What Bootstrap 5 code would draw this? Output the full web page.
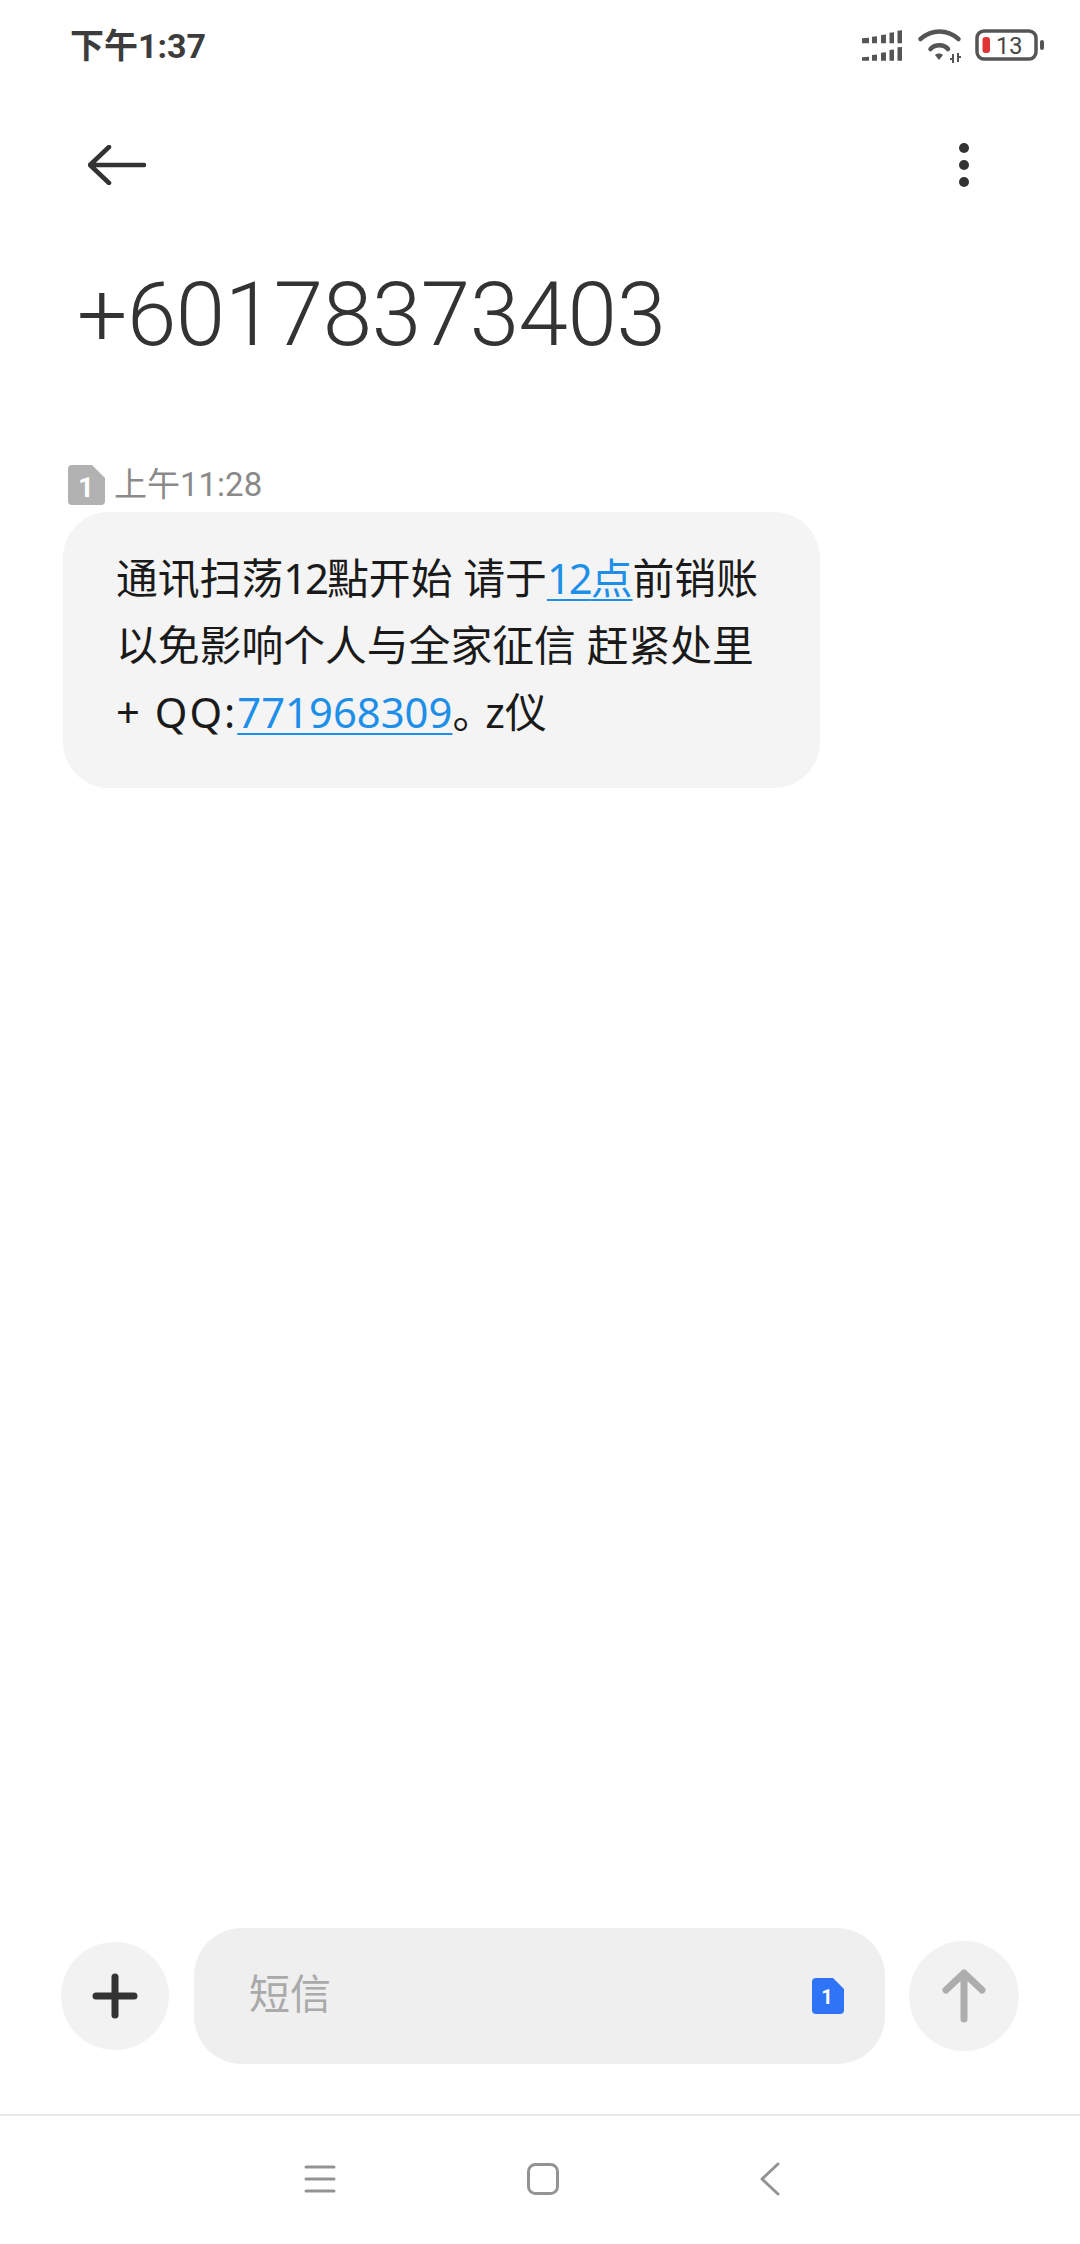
<!DOCTYPE html>
<html lang="zh">
  <head>
    <meta charset="UTF-8" />
    <title>短信</title>
    <link href="https://cdn.jsdelivr.net/npm/bootstrap@5.3.2/dist/css/bootstrap.min.css" rel="stylesheet" />
    <style>
      html, body { height: 100%; }
      body {
        width: 1080px;
        height: 2244px;
        overflow: hidden;
        background: #fff;
        font-family: Roboto, "Noto Sans CJK SC", sans-serif;
      }
      .status-row { height: 92px; padding: 0 36px 0 70px; }
      .status-time { font-size: 34px; font-weight: 700; color: #3c3c3c; line-height: 1; }
      .top-row { height: 92px; padding: 0 110px 0 88px; margin-top: 27px; }
      .phone-title {
        font-size: 89px; font-weight: 300; color: #333; line-height: 1;
        padding-left: 77px; margin-top: 59px; letter-spacing: -0.4px;
      }
      .msg-time {
        padding-left: 68px; margin-top: 98px; height: 55px;
        font-size: 33px; color: #8a8a8a; line-height: 1; gap: 9px;
      }
      .msg-bubble {
        width: 757px; height: 276px; margin: 0 0 0 63px; padding: 32px 20px 0 53px;
        background: #f4f4f4; border-radius: 46px;
        font-family: "Noto Sans", "Noto Sans CJK SC", sans-serif;
        font-size: 41.8px; line-height: 67px; color: #1a1a1a;
      }
      .msg-bubble a { color: #1d8fe8; text-decoration: underline; text-underline-offset: 5px; text-decoration-thickness: 2px; }
      .tight-num { letter-spacing: -2px; }
      .qq-label { letter-spacing: 2px; }
      .small-stop { letter-spacing: -9px; }
      .compose-row { height: 136px; padding-left: 61px; margin-bottom: 50px; }
      .round-btn { width: 108px; height: 108px; background: #f2f2f2; border-radius: 50%; flex: none; }
      .send-btn { width: 110px; height: 110px; margin-left: 24px; }
      .compose-input {
        width: 691px; height: 136px; margin-left: 25px; padding: 0 41px 0 55px;
        background: #efefef; border-radius: 48px;
        font-size: 41px; color: #aaa;
      }
      .nav-row { height: 130px; border-top: 2px solid #e8e8e8; }
      .nav-row svg { flex: none; }
      .nav-inner { padding-left: 304px; height: 126px; }
      .nav-home { margin-left: 191px; }
      .nav-back { margin-left: 201px; }
    </style>
  </head>
  <body class="d-flex flex-column">
    <div class="status-row d-flex align-items-center justify-content-between">
      <span class="status-time">下午1:37</span>
      <svg width="184" height="36" viewBox="0 0 184 36">
        <g fill="#555">
          <path d="M2 10.300l7-.6v5.600H2zM12 8.700l5-.4v7h-5zM21 7l5-.4v8.700h-5zM29.500 4.700l4.500-.4v11h-4.500zM37.500 2.700l4.500-.4v13h-4.500z" />
          <path d="M2 29.300l7-.6v4H2zM12 27l5-.4v6.100h-5zM21 24.700l5-.4v8.400h-5zM29.500 22l4.500-.4v11.100h-4.500zM37.500 19.300l4.500-.4v13.800h-4.500z" />
        </g>
        <g fill="none" stroke="#555" stroke-width="4.500" stroke-linecap="round">
          <path d="M60.500 11C72 1 87 1 98.500 11" />
          <path d="M70.500 21C75 16 84 16 88 21" />
        </g>
        <path d="M75 27c2-2 6-2 8 0l-4 5z" fill="#555" />
        <path d="M93 26v9M98 25v9M90 31h3M98 29h3" stroke="#555" stroke-width="2" fill="none" />
        <rect x="117" y="3" width="59" height="28" rx="7" fill="none" stroke="#555" stroke-width="3.500" />
        <rect x="122.500" y="9" width="7.500" height="16" rx="3" fill="#e03535" />
        <rect x="180" y="12" width="4" height="10" rx="2" fill="#555" />
        <text x="136" y="26" font-family="Roboto, sans-serif" font-size="23.500" fill="#444">13</text>
      </svg>
    </div>

    <div class="top-row d-flex align-items-center justify-content-between">
      <svg width="58" height="40" viewBox="0 0 58 40">
        <path d="M21 2L2 20l19 18M2 20h54" fill="none" stroke="#333" stroke-width="4.500" stroke-linecap="round" stroke-linejoin="round" />
      </svg>
      <svg width="12" height="46" viewBox="0 0 12 46">
        <circle cx="6" cy="6" r="5" fill="#333" /><circle cx="6" cy="23" r="5" fill="#333" /><circle cx="6" cy="40" r="5" fill="#333" />
      </svg>
    </div>

    <div class="phone-title">+60178373403</div>

    <div class="msg-time d-flex align-items-center">
      <svg width="37" height="40" viewBox="0 0 37 40">
        <path d="M4 0h20l13 13v23a4 4 0 0 1-4 4H4a4 4 0 0 1-4-4V4a4 4 0 0 1 4-4z" fill="#b2b2b2" />
        <text x="18" y="32" text-anchor="middle" font-family="Roboto, sans-serif" font-weight="700" font-size="28" fill="#fff">1</text>
      </svg>
      <span>上午11:28</span>
    </div>
    <div class="msg-bubble">
      通讯扫荡<span class="tight-num">12</span>點开始 请于<a href="#"><span class="tight-num">12</span>点</a>前销账<br />以免影响个人与全家征信 赶紧处里<br /><span class="qq-label">+ QQ:</span><a href="#">771968309</a><span class="small-stop">。</span>z仪
    </div>

    <div class="flex-grow-1"></div>

    <div class="compose-row d-flex align-items-center">
      <div class="round-btn d-flex align-items-center justify-content-center">
        <svg width="46" height="46" viewBox="0 0 46 46">
          <path d="M4 23h38M23 4v38" stroke="#333" stroke-width="7" stroke-linecap="round" fill="none" />
        </svg>
      </div>
      <div class="compose-input d-flex align-items-center justify-content-between">
        <span>短信</span>
        <svg width="32" height="36" viewBox="0 0 32 36">
          <path d="M4 0h17l11 11v21a4 4 0 0 1-4 4H4a4 4 0 0 1-4-4V4a4 4 0 0 1 4-4z" fill="#2f74f6" />
          <text x="15" y="26" text-anchor="middle" font-family="Roboto, sans-serif" font-weight="700" font-size="20" fill="#fff">1</text>
        </svg>
      </div>
      <div class="round-btn send-btn d-flex align-items-center justify-content-center">
        <svg width="48" height="54" viewBox="0 0 48 54">
          <path d="M6 21L24 4l18 17M24 4v46" stroke="#adadad" stroke-width="7" stroke-linecap="round" stroke-linejoin="round" fill="none" />
        </svg>
      </div>
    </div>

    <div class="nav-row">
      <div class="nav-inner d-flex align-items-center">
        <svg width="32" height="28" viewBox="0 0 32 28">
          <path d="M2 2h28M2 14h28M2 26h28" stroke="#939393" stroke-width="3" stroke-linecap="round" fill="none" />
        </svg>
        <svg width="32" height="32" viewBox="0 0 32 32" class="nav-home">
          <rect x="1.500" y="1.500" width="29" height="29" rx="7" fill="none" stroke="#939393" stroke-width="3" />
        </svg>
        <svg width="20" height="34" viewBox="0 0 20 34" class="nav-back">
          <path d="M18 2L2 17l16 15" stroke="#939393" stroke-width="3" stroke-linecap="round" stroke-linejoin="round" fill="none" />
        </svg>
      </div>
    </div>
    <script src="https://cdn.jsdelivr.net/npm/bootstrap@5.3.2/dist/js/bootstrap.bundle.min.js"></script>
  </body>
</html>
